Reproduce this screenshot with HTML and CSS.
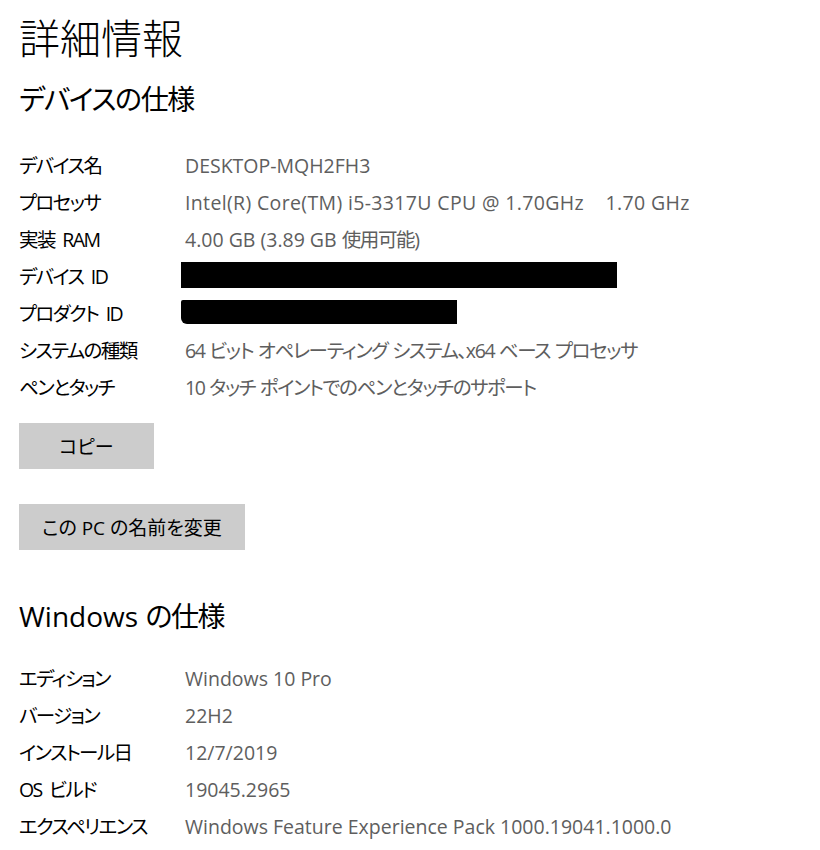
FILE: index.html
```html
<!DOCTYPE html>
<html lang="ja">
  <head>
    <meta charset="UTF-8" />
    <meta name="viewport" content="width=device-width, initial-scale=1.0" />
    <title>詳細情報</title>
    <link rel="stylesheet" href="styles.css">
  </head>

  <body>
    <main class="page">
      <h1 class="title">詳細情報</h1>

      <section class="specs">
        <h2 class="heading"><span class="ja">デバイスの仕様</span></h2>
        <dl class="rows">
          <dt>デバイス名</dt>
          <dd>DESKTOP-MQH2FH3</dd>
          <dt>プロセッサ</dt>
          <dd class="cpu">Intel(R) Core(TM) i5-3317U CPU @ 1.70GHz&nbsp;&nbsp;&nbsp;&nbsp;1.70 GHz</dd>
          <dt>実装 RAM</dt>
          <dd>4.00 GB (3.89 GB <span class="ja">使用可能</span>)</dd>
          <dt>デバイス ID</dt>
          <dd><span class="redact redact-long"></span></dd>
          <dt>プロダクト ID</dt>
          <dd><span class="redact redact-short"></span></dd>
          <dt>システムの種類</dt>
          <dd class="ja">64 ビット オペレーティング システム、x64 ベース プロセッサ</dd>
          <dt>ペンとタッチ</dt>
          <dd class="ja">10 タッチ ポイントでのペンとタッチのサポート</dd>
        </dl>

        <div class="actions">
          <button class="btn">コピー</button>
          <button class="btn">この PC の名前を変更</button>
        </div>
      </section>

      <section class="specs specs-windows">
        <h2 class="heading">Windows <span class="ja">の仕様</span></h2>
        <dl class="rows">
          <dt>エディション</dt>
          <dd>Windows 10 Pro</dd>
          <dt>バージョン</dt>
          <dd>22H2</dd>
          <dt>インストール日</dt>
          <dd>12/7/2019</dd>
          <dt>OS ビルド</dt>
          <dd>19045.2965</dd>
          <dt>エクスペリエンス</dt>
          <dd>Windows Feature Experience Pack 1000.19041.1000.0</dd>
        </dl>
      </section>
    </main>
  </body>
</html>
```

FILE: styles.css
```css
* {
  margin: 0;
  padding: 0;
  box-sizing: border-box;
}

body {
  font-family: "Open Sans", "Noto Sans CJK JP", sans-serif;
  font-feature-settings: "palt";
  background-color: white;
  color: black;
}

.page {
  padding: 12px 19px 0;
}

.ja {
  letter-spacing: -1.4px;
  word-spacing: 1px;
}

.title {
  font-size: 41px;
  font-weight: 300;
  line-height: 52px;
  font-feature-settings: normal;
}

.heading {
  margin-top: 15px;
  font-size: 28px;
  font-weight: 400;
  line-height: 40px;
}

.rows {
  display: grid;
  grid-template-columns: 166px 1fr;
  grid-auto-rows: 37px;
  margin-top: 28px;
  font-size: 19.5px;
  line-height: 37px;
}

.rows dt {
  color: #000;
  letter-spacing: -1.6px;
  word-spacing: 4px;
}

.rows dd {
  color: #5e5e5e;
  white-space: nowrap;
}

.rows .cpu {
  letter-spacing: 0.35px;
}

.redact {
  display: block;
  margin-left: -4px;
  background-color: #000;
}

.redact-long {
  margin-top: 4px;
  width: 436px;
  height: 26px;
}

.redact-short {
  margin-top: 5px;
  width: 276px;
  height: 24px;
  border-radius: 2px 0 0 6px;
}

.actions {
  display: flex;
  flex-direction: column;
  align-items: flex-start;
  gap: 35px;
  margin-top: 17px;
}

.btn {
  height: 46px;
  min-width: 135px;
  padding: 0 23px;
  border: none;
  background-color: #cccccc;
  color: #000;
  font-family: inherit;
  font-feature-settings: inherit;
  font-size: 19px;
}

.specs-windows .heading {
  margin-top: 46px;
}

.specs-windows .rows {
  margin-top: 24px;
}
```
